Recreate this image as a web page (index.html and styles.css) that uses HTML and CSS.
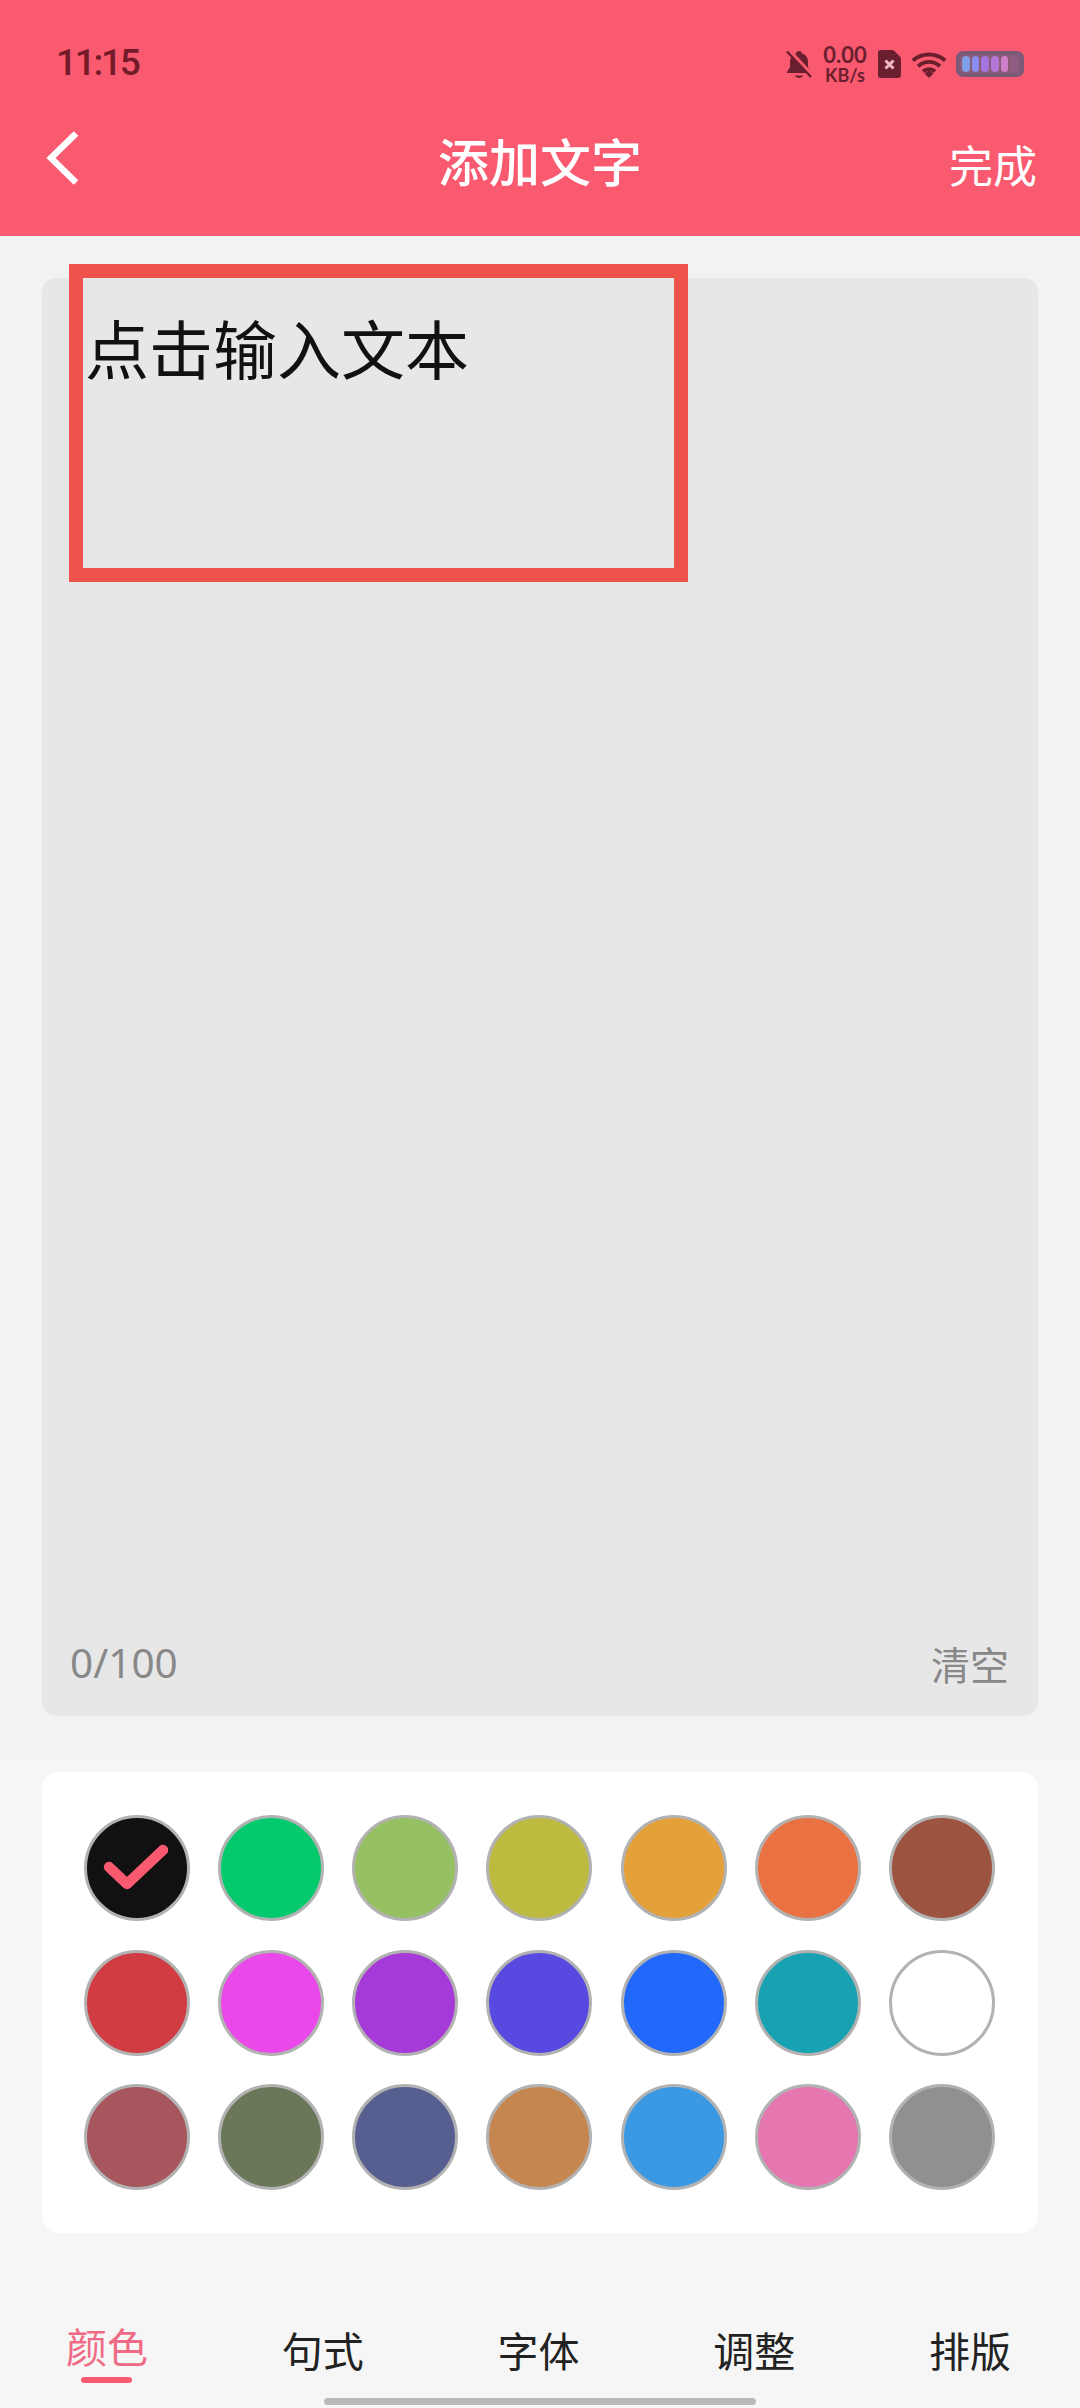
FILE: index.html
```html
<!DOCTYPE html>
<html lang="zh-CN">
<head>
<meta charset="utf-8">
<title>添加文字</title>
<link rel="stylesheet" href="styles.css">
</head>
<body>
<div class="page">
  <header class="top">
    <div class="status">
      <span class="time">11:15</span>
      <div class="sysicons">
        <svg class="ic-bell" viewBox="0 0 26 28"><path d="M13 1c1.800 0 2.900 1 3 2.500 4 1.200 6 4.500 6 8.500v5l3 5v1H1v-1l3-5v-5c0-4 2-7.300 6-8.500C10.100 2 11.200 1 13 1zM9 25.500h8c-.3 1.600-2 2.500-4 2.500s-3.700-.9-4-2.500z" fill="#6b1f2e"/><path d="M3 0 27 26" stroke="#f95a70" stroke-width="3.500"/><path d="M1 1.500 25 27" stroke="#6b1f2e" stroke-width="2.400"/></svg>
        <div class="speed"><span class="speed-num">0.00</span><span class="speed-unit">KB/s</span></div>
        <svg class="ic-sim" viewBox="0 0 23 28"><path d="M3 0h11c1 0 1.800.3 2.500 1L22 6.500c.7.700 1 1.500 1 2.500v16a3 3 0 0 1-3 3H3a3 3 0 0 1-3-3V3a3 3 0 0 1 3-3z" fill="#6b1f2e"/><path d="M7.500 10.500 15.500 18.500M15.500 10.500 7.500 18.500" stroke="#f3b9c2" stroke-width="3"/></svg>
        <svg class="ic-wifi" viewBox="0 0 34 26"><path d="M.8 8.500C10 .5 24 .5 33.200 8.500M6 14.200C12.500 8.500 21.500 8.500 28 14.200M11 19.500C14.500 16.500 19.500 16.500 23 19.500" fill="none" stroke="#6b1f2e" stroke-width="3.800"/><path d="M12.500 21.500 17 18.500 21.500 21.500 17 26z" fill="#6b1f2e"/></svg>
        <div class="battery">
          <i class="cell c1"></i><i class="cell c2"></i><i class="cell c3"></i><i class="cell c4"></i><i class="cell c5"></i><i class="cell c6"></i>
        </div>
      </div>
    </div>
    <nav class="navbar">
      <svg class="back" viewBox="0 0 34 56"><path d="M31 3.500 6 28l25 24.500" fill="none" stroke="#fff" stroke-width="6.500"/></svg>
      <h1 class="title">添加文字</h1>
      <span class="done">完成</span>
    </nav>
  </header>

  <section class="editor-zone">
    <div class="editor">
      <div class="placeholder">点击输入文本</div>
      <div class="editor-foot">
        <span class="count">0/100</span>
        <span class="clear">清空</span>
      </div>
    </div>
    <div class="highlight"></div>
  </section>

  <section class="lower">
    <div class="palette">
      <div class="swatch s-black">
        <svg class="check" viewBox="0 0 66 48"><path d="M7 23 25 40 61 6" fill="none" stroke="#f95a70" stroke-width="10.500" stroke-linecap="round" stroke-linejoin="round"/></svg>
      </div>
      <div class="swatch s-2"></div>
      <div class="swatch s-3"></div>
      <div class="swatch s-4"></div>
      <div class="swatch s-5"></div>
      <div class="swatch s-6"></div>
      <div class="swatch s-7"></div>
      <div class="swatch s-8"></div>
      <div class="swatch s-9"></div>
      <div class="swatch s-10"></div>
      <div class="swatch s-11"></div>
      <div class="swatch s-12"></div>
      <div class="swatch s-13"></div>
      <div class="swatch s-14"></div>
      <div class="swatch s-15"></div>
      <div class="swatch s-16"></div>
      <div class="swatch s-17"></div>
      <div class="swatch s-18"></div>
      <div class="swatch s-19"></div>
      <div class="swatch s-20"></div>
      <div class="swatch s-21"></div>
    </div>
    <div class="tabs">
      <div class="tab active">颜色</div>
      <div class="tab">句式</div>
      <div class="tab">字体</div>
      <div class="tab">调整</div>
      <div class="tab">排版</div>
    </div>
    <div class="homebar"></div>
  </section>
</div>
</body>
</html>
```
FILE: styles.css
```css
* { box-sizing: border-box; margin: 0; padding: 0; }
html, body { width: 1080px; height: 2408px; overflow: hidden; }
body { font-family: "Noto Sans CJK SC", "Noto Sans", sans-serif; background: #f6f6f6; }
.page { width: 1080px; height: 2408px; display: flex; flex-direction: column; }

.top { height: 236px; background: #f95a70; flex: none; }
.status { height: 124px; display: flex; justify-content: space-between; align-items: flex-start; padding: 42px 56px 0 56px; }
.time { font-family: Roboto, sans-serif; font-weight: 500; font-size: 37px; line-height: 42px; letter-spacing: -2.300px; color: #741b2a; }
.sysicons { display: flex; align-items: flex-start; }
.ic-bell { width: 26px; height: 28px; margin-top: 8px; }
.speed { width: 46px; margin-left: 10px; margin-top: 2px; display: flex; flex-direction: column; align-items: center; color: #6b1f2e; font-family: Lato, sans-serif; font-weight: 700; }
.speed-num { font-size: 22px; line-height: 22px; }
.speed-unit { font-size: 18px; line-height: 18px; }
.ic-sim { width: 23px; height: 28px; margin: 8px 0 0 10px; }
.ic-wifi { width: 34px; height: 26px; margin: 10px 0 0 11px; }
.battery { width: 68px; height: 26px; margin: 9px 0 0 10px; border: 4px solid #7b5a78; border-radius: 7px; background: #8a5a76; display: flex; gap: 2px; padding: 1px 2px; }
.cell { width: 9px; border-radius: 4px; display: block; }
.c1 { background: #7f9fe6; }
.c2 { background: #8a8cf0; }
.c3 { background: #a275e0; }
.c4 { background: #b678d8; }
.c5 { background: #cf80cc; }
.c6 { background: #8f5c84; }

.navbar { height: 112px; position: relative; display: flex; align-items: flex-start; justify-content: center; }
.back { position: absolute; left: 45px; top: 6px; width: 34px; height: 56px; }
.title { font-size: 51px; font-weight: 500; line-height: 72px; color: #fff; }
.done { position: absolute; right: 43px; top: 8px; font-size: 44px; line-height: 64px; color: #fff; }

.editor-zone { position: relative; height: 1523px; background: #f1f2f4; padding: 42px 42px 0; flex: none; }
.editor { height: 1438px; background: #e7e7e7; border-radius: 14px; display: flex; flex-direction: column; justify-content: space-between; padding: 28px 29px 26px; }
.placeholder { font-size: 64px; line-height: 80px; color: #111; margin-left: 14px; }
.editor-foot { display: flex; justify-content: space-between; font-size: 40px; line-height: 54px; color: #888; }
.count { font-family: "Noto Sans", sans-serif; font-size: 40.500px; margin-left: -1px; }
.clear { font-size: 39px; }
.highlight { position: absolute; left: 69px; top: 28px; width: 619px; height: 318px; border: 14px solid #f0524c; }

.lower { flex: 1; padding: 13px 42px 0; display: flex; flex-direction: column; position: relative; }
.palette { height: 461px; background: #fff; border-radius: 16px; display: grid; grid-template-columns: repeat(7, 106px); grid-auto-rows: 106px; justify-content: space-between; align-content: start; row-gap: 28.500px; padding: 43px 43px 0 42px; flex: none; }
.swatch { width: 106px; height: 106px; border-radius: 50%; border: 3px solid #b2b2b2; display: flex; align-items: center; justify-content: center; }
.check { width: 66px; height: 48px; margin-right: 4px; flex: none; }
.s-black { background: #111; }
.s-2 { background: #05ca6d; }
.s-3 { background: #95c163; }
.s-4 { background: #bcbb3f; }
.s-5 { background: #e4a139; }
.s-6 { background: #ea7142; }
.s-7 { background: #9c5340; }
.s-8 { background: #d03c42; }
.s-9 { background: #ea48e8; }
.s-10 { background: #a53ad9; }
.s-11 { background: #584ae0; }
.s-12 { background: #2269fb; }
.s-13 { background: #18a2b1; }
.s-14 { background: #fff; }
.s-15 { background: #a6565c; }
.s-16 { background: #6a7759; }
.s-17 { background: #565f90; }
.s-18 { background: #c5864f; }
.s-19 { background: #3b98e2; }
.s-20 { background: #e676b0; }
.s-21 { background: #909090; }

.tabs { display: flex; justify-content: space-between; margin: 88px 27px 0 24px; }
.tab { width: 82px; font-size: 41px; line-height: 56px; color: #222; text-align: center; white-space: nowrap; position: relative; }
.tab.active { color: #ef6a85; margin-top: -4px; }
.tab.active::after { content: ""; position: absolute; left: 15px; top: 60px; width: 51px; height: 6px; border-radius: 3px; background: #f95a70; }
.homebar { position: absolute; left: 324px; top: 639px; width: 432px; height: 7px; border-radius: 4px; background: #b9b9b9; }
```
